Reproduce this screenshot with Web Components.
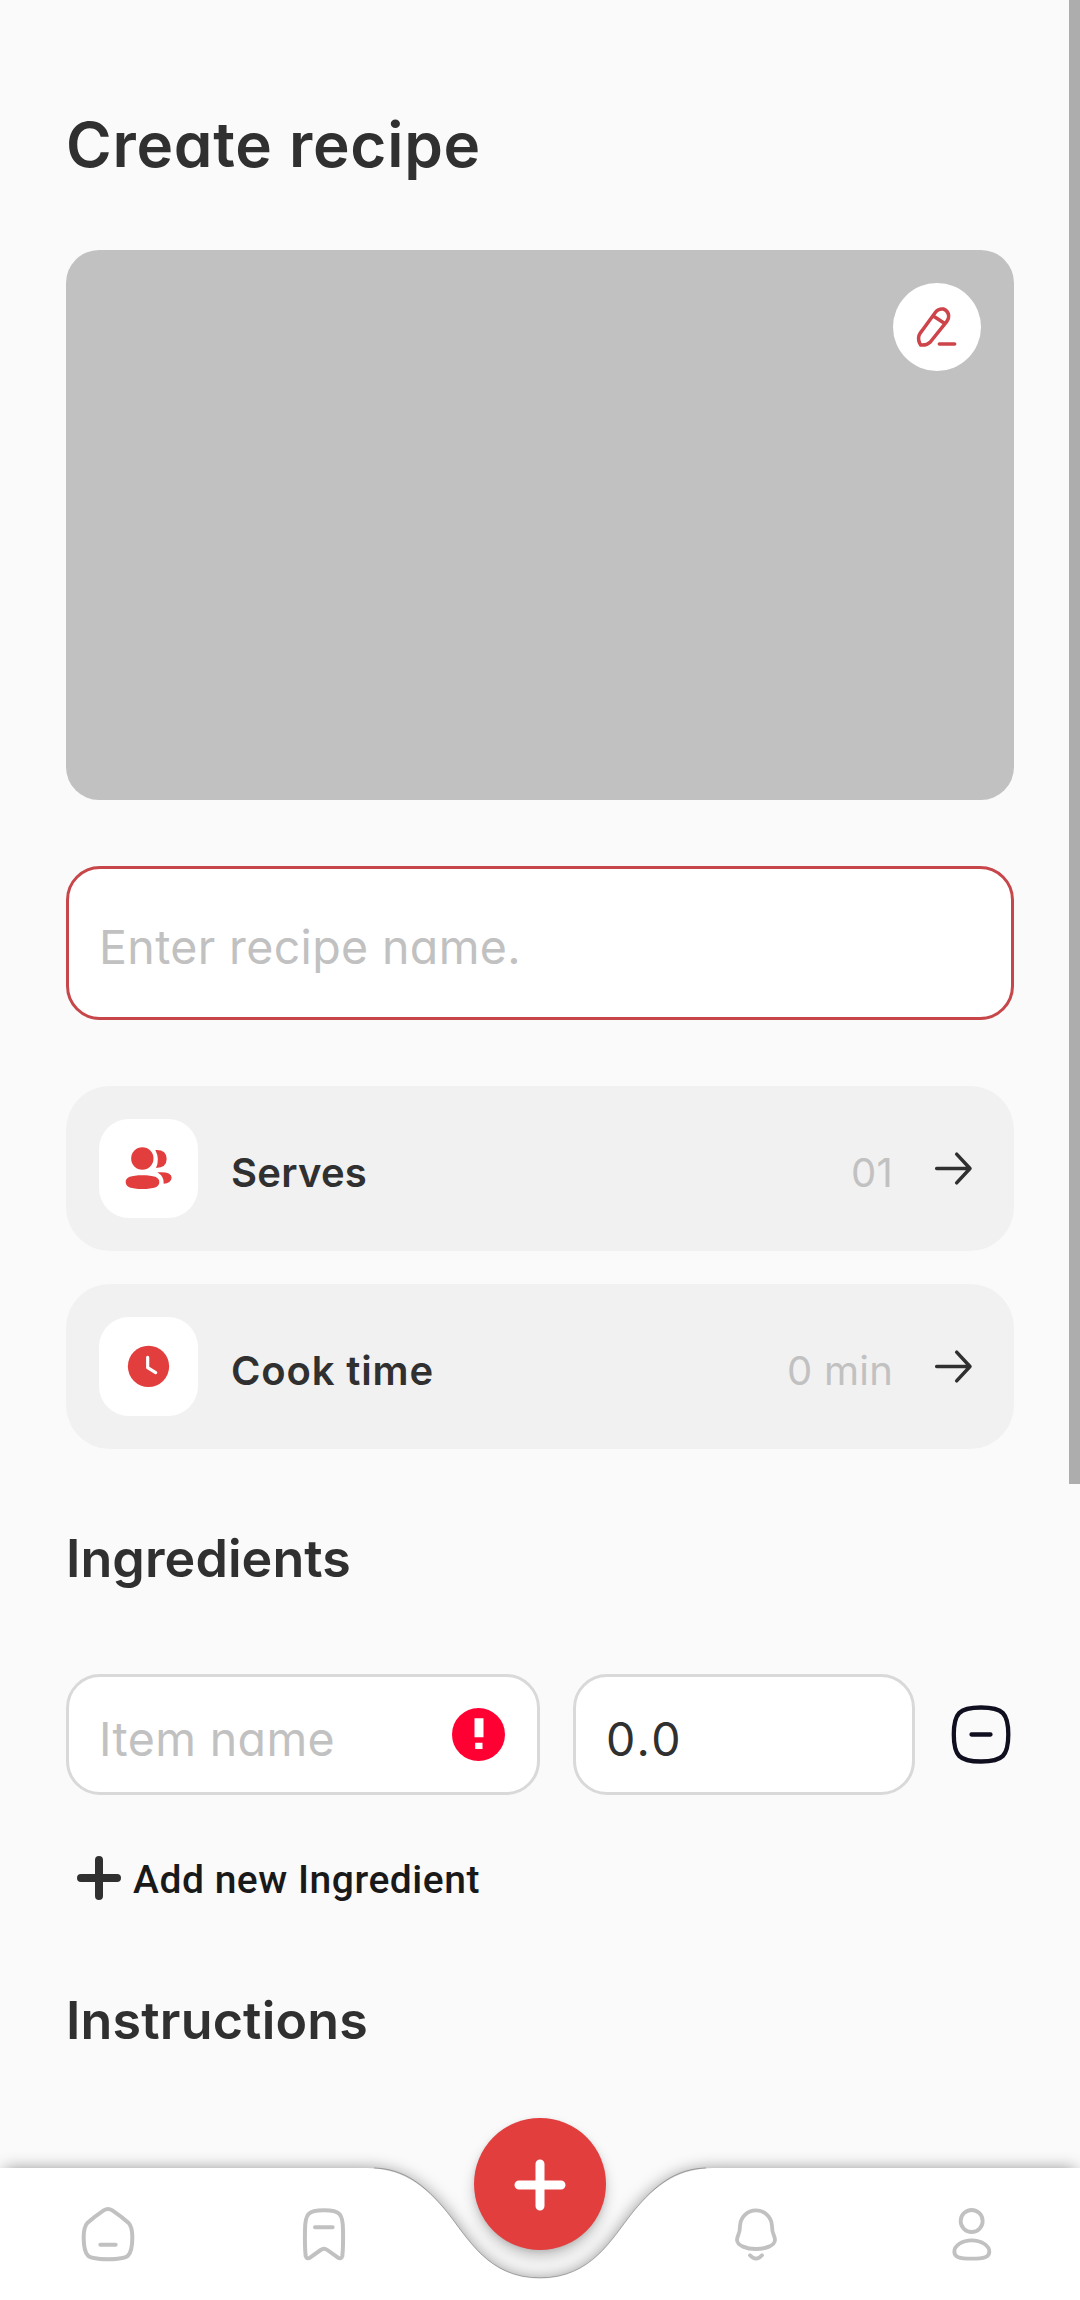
<!DOCTYPE html>
<html lang="en">
<head>
<meta charset="utf-8">
<title>Create recipe</title>
<style>
html,body{margin:0;background:#fafafa}
body{font-family:Inter,"Liberation Sans",sans-serif;font-feature-settings:"cv11";color:#303030}
</style>
</head>
<body>
<recipe-app></recipe-app>
<script>
function define(name, html, ready) {
  const template = document.createElement('template');
  template.innerHTML = html;
  customElements.define(name, class extends HTMLElement {
    connectedCallback() {
      if (this.shadowRoot) return;
      this.attachShadow({mode: 'open'}).append(template.content.cloneNode(true));
      if (ready) ready(this, this.shadowRoot);
    }
  });
}

/* One line of text, tracked so that it fills the given measure. */
define('tracked-text', `<style>:host{display:block;white-space:nowrap;flex:none}span{display:inline-block}</style><span><slot></slot></span>`,
  (host, root) => {
    const span = root.querySelector('span');
    const spacing = (Number(host.getAttribute('measure')) - span.getBoundingClientRect().width) / host.textContent.length;
    span.style.letterSpacing = spacing.toFixed(3) + 'px';
  });

define('section-title', `<style>:host{display:block;font-size:52px;line-height:64px;font-weight:600;color:#303030}</style><slot></slot>`);

define('photo-picker', `<style>
:host{display:flex;justify-content:flex-end;align-items:flex-start;height:550px;box-sizing:border-box;padding:33px;border-radius:33px;background:#c1c1c1}
button{all:unset;width:88px;height:88px;border-radius:50%;background:#fff}
svg{display:block}</style>
<button aria-label="Edit"><svg width="88" height="88" viewBox="99 128 264 264" fill="none" stroke="#cd444a" stroke-width="10.500" stroke-linejoin="round" stroke-linecap="round">
<path d="M182 314Q173 300 177 285Q179 280 186 271L227 215Q236 204 250 206Q264 211 266 226Q267 234 260 244L211 305Q200 316 182 314ZM221 228L252 248M238 311H284"/></svg></button>`);

define('text-field', `<style>
:host{display:flex;align-items:center;justify-content:space-between;box-sizing:border-box;height:121px;flex:none;padding:0 32px 0 30px;border:3px solid #d9d9d9;border-radius:34px;background:#fff;font-size:46.5px;font-weight:430;line-height:56px;color:#c1c1c1}
:host([focused]){height:154px;border-color:#c6464a}
:host([filled]){color:#303030}
.text{padding-top:8px}
</style><div class="text"><slot></slot></div><slot name="end"></slot>`);

define('option-row', `<style>
:host{display:flex;align-items:center;height:165px;box-sizing:border-box;padding:0 33px;gap:33px;border-radius:44px;background:#f1f1f1;font-size:40px;line-height:48px}
.tile{width:99px;height:99px;flex:none;border-radius:30px;background:#fff}
.label{flex:1;font-weight:600;padding-top:8px}
.value{color:#c1c1c1;padding-top:8px;font-weight:420}
svg{display:block}
</style>
<div class="tile"><slot name="icon"></slot></div><div class="label"><slot></slot></div><div class="value"><slot name="value"></slot></div>
<svg width="55" height="55" viewBox="528 213 165 165" fill="none" stroke="#303030" stroke-width="10.500" stroke-linecap="round" stroke-linejoin="round"><path d="M560 295.500H660M620 252.500L660 295.500L620 338.500"/></svg>`);

define('error-badge', `<style>:host,svg{display:block}</style><svg width="53" height="53" viewBox="1207.500 594 159 159"><circle cx="1287" cy="673.500" r="79.500" fill="#ff0033"/><path d="M1275 625H1302V682H1275ZM1277 698H1299V717H1277Z" fill="#fff"/></svg>`);

define('ingredient-row', `<style>:host{display:flex;align-items:center;gap:33px}svg{display:block;flex:none}slot{display:contents}</style><slot></slot>
<svg width="66" height="66" viewBox="948 1701.500 66 66" fill="none" stroke="#100f1f" stroke-width="4.300" stroke-linecap="round"><path d="M981 1707C1003 1707 1008.300 1713 1008.300 1734S1003 1761 981 1761S953.800 1755 953.800 1734S959 1707 981 1707ZM971.500 1734H990.500"/></svg>`);

define('add-button', `<style>:host{display:flex;align-items:flex-start;gap:12px;padding-left:11px;height:48px;font:500 39px/49px Roboto,sans-serif;color:#191919}svg{display:block}</style>
<svg width="44" height="44" viewBox="0 0 44 44" stroke="#303030" stroke-width="8" stroke-linecap="round"><path d="M22 4V40M4 22H40"/></svg><slot></slot>`);

define('scroll-thumb', `<style>:host{display:block;position:absolute;top:0;right:0;width:11px;height:1484px;background:#adadad}</style>`);

define('bottom-nav', `<style>
:host{display:flex;position:relative;height:132px;flex:none;align-items:center}
.bar{position:absolute;left:0;bottom:0;overflow:hidden}
.item{position:relative;flex:1;display:flex;justify-content:center}
.item svg{display:block}
.fab{position:absolute;left:474px;top:-50px;width:132px;height:132px;border-radius:50%;background:#e23e3e;box-shadow:0 8px 14px rgba(0,0,0,.20),0 2px 5px rgba(0,0,0,.10);display:block}
</style>
<svg class="bar" width="1080" height="192" viewBox="0 2108 1080 192">
<defs><filter id="soft" x="-5%" y="-40%" width="110%" height="180%"><feGaussianBlur stdDeviation="8"/></filter></defs>
<path filter="url(#soft)" fill="#000" fill-opacity=".44" d="M5 2169H366C400 2169 424 2185 447 2213C468 2239 488 2279 540 2279S612 2239 633 2213C656 2185 680 2169 714 2169H1075V2320H5Z"/>
<path fill="#fff" d="M0 2168H366C400 2168 424 2184 447 2212C468 2238 488 2278 540 2278S612 2238 633 2212C656 2184 680 2168 714 2168H1080V2300H0Z"/>
<path fill="none" stroke="#000" stroke-opacity=".35" stroke-width=".8" d="M374 2168C404 2169 424 2184 447 2212C468 2238 488 2278 540 2278S612 2238 633 2212C656 2184 676 2169 706 2168"/></svg>
<div class="item"><svg width="66" height="66" viewBox="225 182 198 198" fill="none" stroke="#c1c1c1" stroke-width="12" stroke-linecap="round" stroke-linejoin="round"><path d="M311 210Q324 202 337 210Q361 226 386 248Q397 260 397 291Q397 333 384 346Q375 356 324 357Q273 356 264 346Q251 333 251 291Q251 260 262 248Q287 226 311 210ZM301 313.500H347"/></svg></div>
<div class="item"><svg width="66" height="66" viewBox="873 182 198 198" fill="none" stroke="#c1c1c1" stroke-width="12" stroke-linecap="round" stroke-linejoin="round"><path d="M972 210C1020 210 1029 220 1029 270Q1030 320 1027 347Q1024 357 1014 352L982 329Q972 322 962 329L930 352Q920 357 917 347Q914 320 915 270C915 220 924 210 972 210ZM945 261H998"/></svg></div>
<div class="item"></div>
<div class="item"><svg width="66" height="66" viewBox="129 182 198 198" fill="none" stroke="#c1c1c1" stroke-width="11.500" stroke-linecap="round" stroke-linejoin="round"><path d="M228 210C202 210 181 230 180 257C180 285 171 284 171 299C172 316 199 326 228 326S284 316 285 299C285 284 276 285 276 257C275 230 254 210 228 210ZM210 345Q228 365 246 345"/></svg></div>
<div class="item"><svg width="66" height="66" viewBox="777 182 198 198" fill="none" stroke="#c1c1c1" stroke-width="11.500"><circle cx="875" cy="242" r="33"/><path d="M875 300C904 300 928 316 928 334C928 350 913 355 875 355S823 350 823 334C823 316 846 300 875 300Z"/></svg></div>
<svg class="fab" viewBox="0 0 132 132" stroke="#fff" stroke-width="9" stroke-linecap="round"><path d="M66 46V88M45 67H87"/></svg>`);

define('recipe-app', `<style>
:host{display:flex;flex-direction:column;position:relative;width:1080px;height:2300px;overflow:hidden;background:#fafafa}
main{flex:1;display:flex;flex-direction:column;padding:108px 66px 0}
h1{margin:0 0 68px;font-size:62px;line-height:74px;font-weight:600;color:#303030}
.rows{display:flex;flex-direction:column;gap:33px;margin:66px 0 78px}
photo-picker{margin-bottom:66px}
svg{display:block}
ingredient-row{margin:83px 0 61px}
add-button{margin-bottom:85px}
.item{width:474px}.amount{width:342px}
</style>
<main>
<h1><tracked-text measure="415">Create recipe</tracked-text></h1>
<photo-picker></photo-picker>
<text-field focused><tracked-text measure="422">Enter recipe name.</tracked-text></text-field>
<div class="rows">
<option-row><svg slot="icon" width="99" height="99" viewBox="147 147 297 297" fill="#e23e3e"><circle cx="277" cy="265.500" r="33.500"/><path d="M316 240Q350 238 350 267Q350 293 318 294Q330 267 316 240ZM277 316C312 316 328 322 328 336C328 351 312 357 277 357C243 357 227 351 227 336C227 322 243 316 277 316ZM322 307Q364 304 365 323Q363 340 341 341Q343 320 322 307Z"/></svg><tracked-text measure="136">Serves</tracked-text><tracked-text slot="value" measure="42">01</tracked-text></option-row>
<option-row><svg slot="icon" width="99" height="99" viewBox="147 741 297 297"><circle cx="295.500" cy="889" r="62" fill="#e23e3e"/><path d="M293 862V893L317 908" fill="none" stroke="#fff" stroke-width="9.500" stroke-linecap="round" stroke-linejoin="round"/></svg><tracked-text measure="203">Cook time</tracked-text><tracked-text slot="value" measure="106">0 min</tracked-text></option-row>
</div>
<section-title><tracked-text measure="285">Ingredients</tracked-text></section-title>
<ingredient-row>
<text-field class="item"><tracked-text measure="236">Item name</tracked-text><error-badge slot="end"></error-badge></text-field>
<text-field class="amount" filled><tracked-text measure="77">0.0</tracked-text></text-field>
</ingredient-row>
<add-button><tracked-text measure="347">Add new Ingredient</tracked-text></add-button>
<section-title><tracked-text measure="302">Instructions</tracked-text></section-title>
</main>
<bottom-nav></bottom-nav>
<scroll-thumb></scroll-thumb>`);
</script>
</body>
</html>
